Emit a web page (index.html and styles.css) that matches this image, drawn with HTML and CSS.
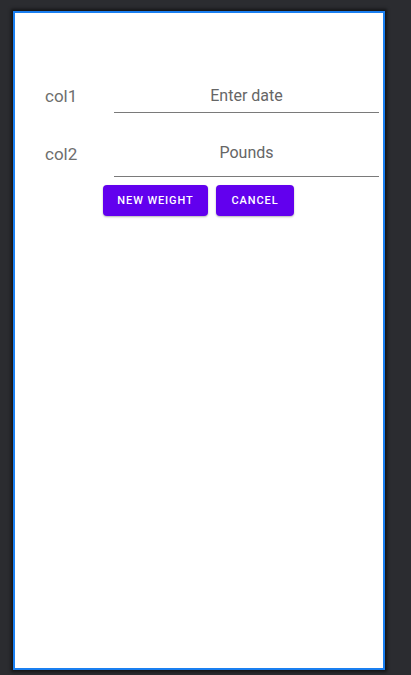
FILE: index.html
```html
<!DOCTYPE html>
<html>
<head>
<meta charset="utf-8">
<link rel="stylesheet" href="styles.css">
</head>
<body>
<div class="frame">
  <div class="row row-one">
    <span class="label">col1</span>
    <div class="field field-one">Enter date</div>
  </div>
  <div class="row row-two">
    <span class="label">col2</span>
    <div class="field field-two">Pounds</div>
  </div>
  <div class="actions">
    <button class="btn btn-new">NEW WEIGHT</button>
    <button class="btn btn-cancel">CANCEL</button>
  </div>
</div>
</body>
</html>
```
FILE: styles.css
```css
html, body {
  margin: 0;
  padding: 0;
  height: 100%;
  background: #2b2c30;
  font-family: Roboto, "Liberation Sans", sans-serif;
}
body {
  padding: 11px 0 0 13px;
  box-sizing: border-box;
}
.frame {
  width: 372px;
  height: 659px;
  box-sizing: border-box;
  background: #ffffff;
  border: 2px solid #1a7ff0;
  box-shadow: 0 0 3px 2px rgba(0,0,0,0.55);
  padding: 73px 4px 0 30px;
}
.row {
  display: flex;
  align-items: flex-end;
}
.label {
  width: 69px;
  font-size: 17px;
  line-height: 19px;
  color: #6e6e6e;
}
.row-one .label { padding-bottom: 7px; }
.row-two .label { padding-bottom: 13px; }
.field {
  flex: 1;
  text-align: center;
  font-size: 16px;
  line-height: 19px;
  color: #666666;
  border-bottom: 1px solid #7a7a7a;
}
.field-one { padding-bottom: 7px; }
.row-two { margin-top: 30px; }
.field-two { padding-bottom: 14px; }
.actions {
  display: flex;
  gap: 8px;
  margin-top: 8px;
  padding-left: 58px;
}
.btn {
  height: 31px;
  border: none;
  border-radius: 4px;
  background: #6200ee;
  color: #ffffff;
  font-family: Roboto, "Liberation Sans", sans-serif;
  font-weight: 500;
  font-size: 11px;
  letter-spacing: 0.9px;
  padding: 0;
  box-shadow: 0 1px 2px rgba(0,0,0,0.3);
  -webkit-font-smoothing: antialiased;
}
.btn-new { width: 105px; }
.btn-cancel { width: 78px; }
```
